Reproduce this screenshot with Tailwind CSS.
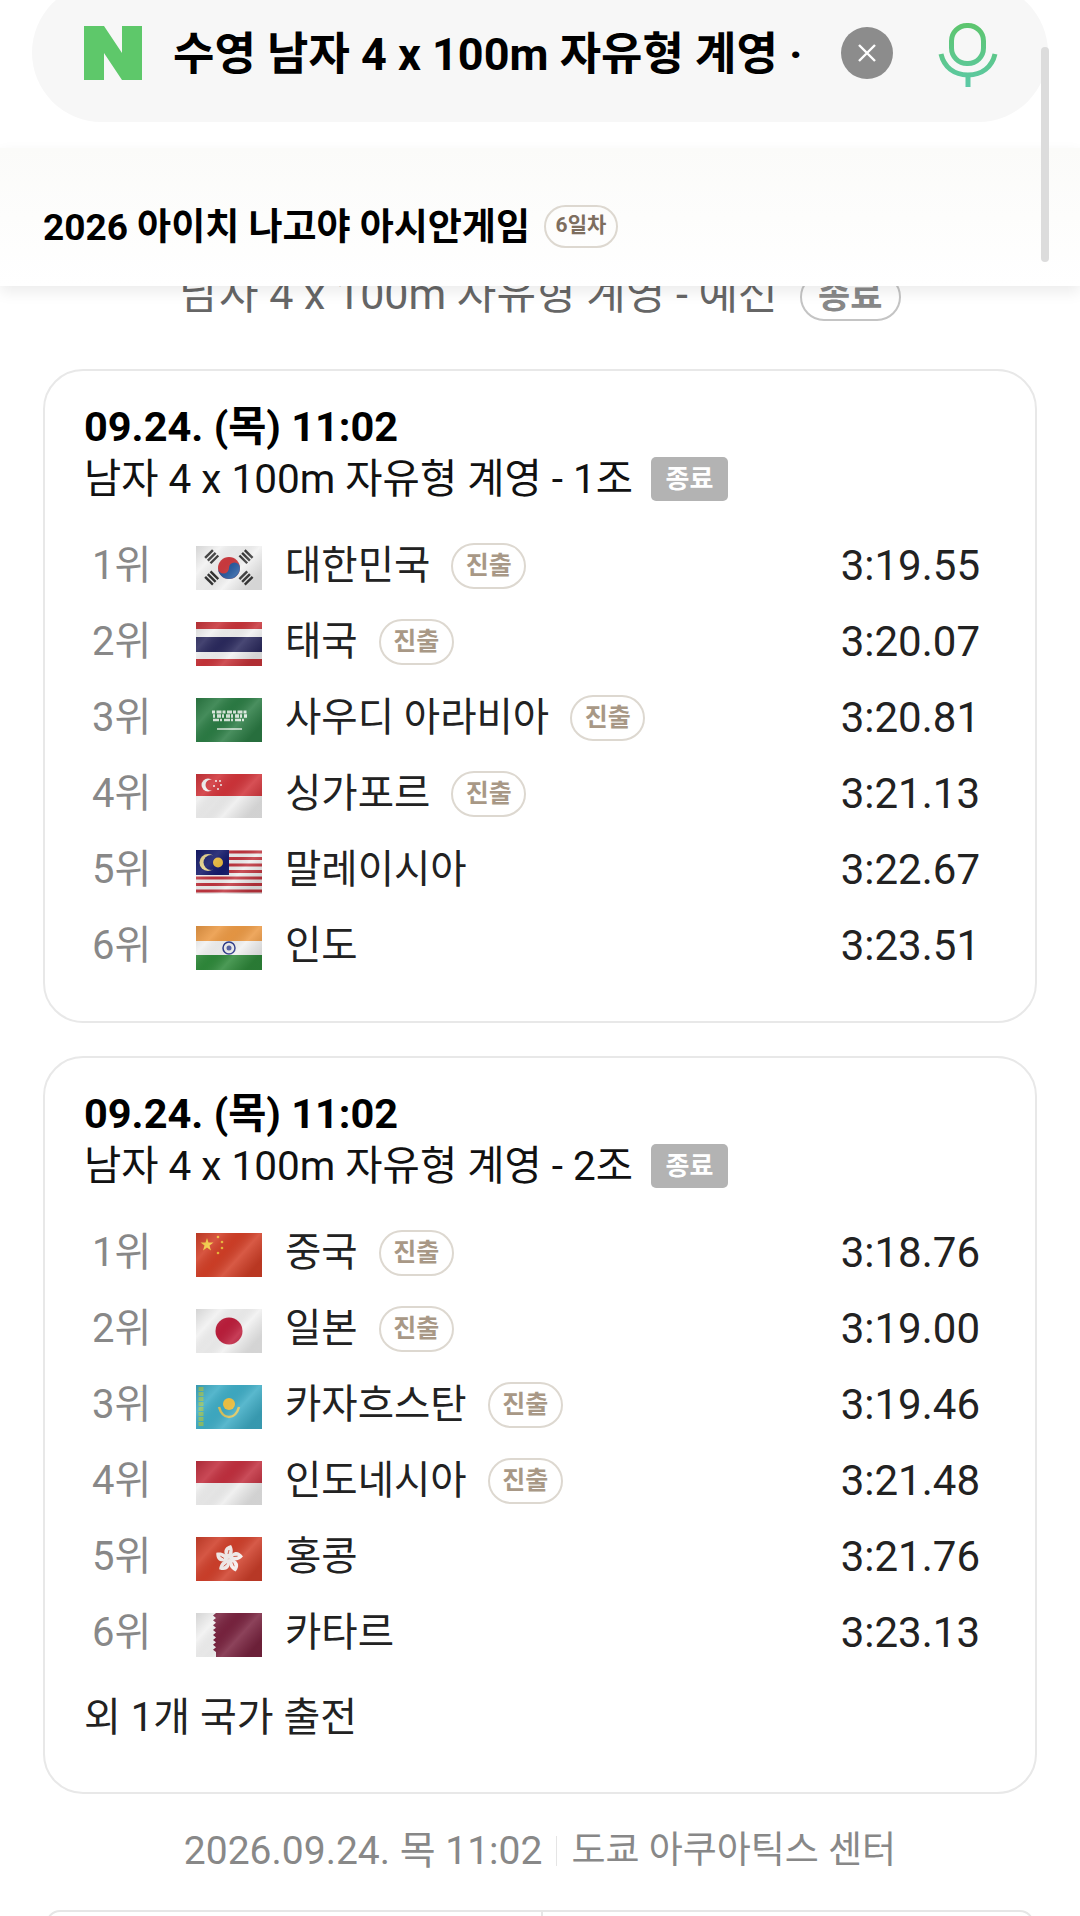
<!DOCTYPE html>
<html lang="ko">
<head>
    <meta charset="UTF-8">
    <meta name="viewport" content="width=device-width, initial-scale=1.0">
    <title>수영 남자 4 x 100m 자유형 계영</title>
    <script src="https://cdn.jsdelivr.net/npm/@tailwindcss/browser@4"></script>
</head>
<body class="bg-white">

<svg class="absolute w-0 h-0">
    <defs>
        <linearGradient id="sheen" x1="0" y1="0" x2="1" y2="0.6">
            <stop offset="0" stop-color="#000" stop-opacity="0.12"/>
            <stop offset="0.28" stop-color="#fff" stop-opacity="0.12"/>
            <stop offset="0.5" stop-color="#000" stop-opacity="0.04"/>
            <stop offset="0.72" stop-color="#fff" stop-opacity="0.14"/>
            <stop offset="1" stop-color="#000" stop-opacity="0.12"/>
        </linearGradient>
        <linearGradient id="mic" gradientUnits="userSpaceOnUse" x1="0" y1="0" x2="0" y2="65">
            <stop offset="0" stop-color="#5dc56c"/>
            <stop offset="1" stop-color="#5cc9a7"/>
        </linearGradient>
    </defs>
</svg>

<div class="relative h-[1916px] overflow-hidden font-[Roboto,'Noto_Sans_CJK_KR',sans-serif] text-[#111]">

    <!-- search bar -->
    <div class="h-[148px] px-8 flex flex-col">
        <div class="-mt-[17px] h-[139px] shrink-0 rounded-full bg-[#f7f7f7] flex items-start pt-[39px] pl-[52px]">
            <svg class="w-[58px] h-[54px] mt-[4px] shrink-0" viewBox="0 0 58 54"><path fill="#5ec86a" d="M0 0h20l18 27V0h20v54H38L20 27v27H0z"/></svg>
            <div class="ml-[31px] w-[632px] h-[62px] mt-[2px] whitespace-nowrap text-[45px] leading-[62px] font-bold text-black">수영 남자 4 x 100m 자유형 계영 ·</div>
            <div class="ml-9 mt-[5px] w-[52px] h-[52px] rounded-full bg-[#8c8c8c] flex items-center justify-center shrink-0">
                <svg class="w-[20px] h-[20px]" viewBox="0 0 20 20"><path d="M2 2l16 16M18 2L2 18" stroke="#fff" stroke-width="2.4"/></svg>
            </div>
            <svg class="ml-[45px] w-[60px] h-[66px] shrink-0" viewBox="0 0 60 66" fill="none" stroke="url(#mic)" stroke-width="5">
                <rect x="13.500" y="3.500" width="32" height="38" rx="15.500"/>
                <path d="M3 32c3 13 13 21 27 21s24-8 27-21"/>
                <path d="M30 53v12"/>
            </svg>
        </div>
    </div>

    <!-- sticky title -->
    <div class="relative z-10 h-[138px] bg-gradient-to-b from-[#fbfbf9] to-white shadow-[0_6px_14px_rgba(0,0,0,0.08)] px-[43px] pt-[18px] flex items-center gap-[14px]">
        <span class="mt-[4px] text-[37px] font-bold text-black whitespace-nowrap">2026 아이치 나고야 아시안게임</span>
        <span class="w-[74px] h-[43px] rounded-full border-2 border-[#ddd8d0] text-[#7d6e5f] text-[21px] font-bold flex items-center justify-center">6일차</span>
    </div>

    <!-- round title, half hidden under the sticky bar -->
    <div class="-mt-[14px] h-[97px] flex items-start justify-center gap-[22px]">
        <span class="text-[#666] text-[43px] leading-[44px] whitespace-nowrap">남자 4 x 100m 자유형 계영 - 예선</span>
        <span class="mt-[1px] w-[101px] h-[48px] rounded-full border-2 border-[#c4c4c4] text-[#888] font-bold text-[35px] flex items-center justify-center">종료</span>
    </div>

    <div id="heats" class="px-[43px] flex flex-col gap-[33px]"></div>

    <!-- venue line -->
    <div class="mt-[34px] flex items-center justify-center text-[#888] leading-[46px]">
        <span class="text-[39px]">2026.09.24. 목 11:02</span>
        <span class="w-[1px] h-[30px] bg-[#e5e5e5] mx-[14px]"></span>
        <span class="text-[37px]">도쿄 아쿠아틱스 센터</span>
    </div>

    <!-- next card top edge -->
    <div class="mx-[46px] mt-[36px] h-[40px] rounded-t-[14px] border-2 border-[#e6e6e6] flex">
        <div class="w-[495px] border-r-2 border-[#e6e6e6]"></div>
    </div>

    <!-- scrollbar -->
    <div class="absolute left-[1041px] top-[47px] w-[8px] h-[215px] rounded-full bg-[#dcdcdc] z-20"></div>
</div>

<script>
    const sheen = '<rect width="66" height="44" fill="url(#sheen)"/>';
    const flag = inner => `<svg class="mt-[3px] w-[66px] h-[44px] blur-[0.4px] shrink-0" viewBox="0 0 66 44">${inner}${sheen}</svg>`;

    const trigram = (x, y, angle) => `<g transform="translate(${x} ${y}) rotate(${angle})" fill="#333"><rect x="-5.500" y="-5" width="11" height="2.400"/><rect x="-5.500" y="-1.200" width="11" height="2.400"/><rect x="-5.500" y="2.600" width="11" height="2.400"/></g>`;
    const petal = angle => `<g transform="rotate(${angle} 33 22)"><path d="M33 22C26 17 27 10 35 8c3 5 2 10-2 14z" fill="#f8f1ef"/><path d="M32 17l1-4" stroke="#d0402b" stroke-width="0.800"/></g>`;

    const flags = {
        kr: `<rect width="66" height="44" fill="#f2f2f2"/>
             ${trigram(15.7, 10.7, -45)}${trigram(50, 10.7, 45)}${trigram(15.7, 32, 45)}${trigram(50, 32, -45)}
             <circle cx="33" cy="22" r="11" fill="#cf3a3f"/>
             <path d="M22 22a11 11 0 0 0 22 0 5.500 5.500 0 0 0-11 0 5.500 5.500 0 0 1-11 0z" fill="#24589f"/>`,
        th: `<rect width="66" height="44" fill="#f1f1f1"/><rect width="66" height="7" fill="#c8343a"/><rect y="37" width="66" height="7" fill="#c8343a"/><rect y="15" width="66" height="15" fill="#2b2a5e"/>`,
        sa: `<rect width="66" height="44" fill="#2c7d45"/><g stroke="#dcebdf" fill="none"><path d="M16 14h35" stroke-width="3" stroke-dasharray="3 1.500 5 1"/><path d="M17 18h34" stroke-width="3.500" stroke-dasharray="2 2 4 1"/><path d="M17 22h33" stroke-width="2.500" stroke-dasharray="6 1 2 2"/><path d="M21 31h25" stroke-width="1.500"/></g>`,
        sg: `<rect width="66" height="44" fill="#eeeeee"/><rect width="66" height="22" fill="#d1343a"/><circle cx="12" cy="11" r="6.500" fill="#f2f2f2"/><circle cx="15" cy="11" r="5.500" fill="#d1343a"/><g fill="#f2f2f2"><circle cx="20" cy="7" r="1"/><circle cx="24" cy="7" r="1"/><circle cx="18" cy="12" r="1"/><circle cx="25" cy="11" r="1"/><circle cx="22" cy="15" r="1"/></g>`,
        my: `<rect width="66" height="44" fill="#eee"/><path d="M0 2h66M0 8.500h66M0 15h66M0 21.500h66M0 28h66M0 34.500h66M0 41h66" stroke="#c0343e" stroke-width="3"/><rect width="33" height="25" fill="#141a6b"/><circle cx="12" cy="12.500" r="8.500" fill="#e8d48a"/><circle cx="15" cy="12.500" r="7.500" fill="#141a6b"/><circle cx="22" cy="12.500" r="5" fill="#e8b93c"/>`,
        in: `<rect width="66" height="44" fill="#f1f1f1"/><rect width="66" height="15" fill="#ec9a45"/><rect y="29" width="66" height="15" fill="#2f8a3b"/><circle cx="33" cy="22" r="6" fill="none" stroke="#2d3a8c" stroke-width="1.500"/><circle cx="33" cy="22" r="2.500" fill="#5560a8"/>`,
        cn: `<rect width="66" height="44" fill="#d23f27"/><path d="M11 5l1.500 4.500h5l-4 3 1.500 5-4-3-4 3 1.500-5-4-3h5z" fill="#f4c93f"/><g fill="#f0b838"><circle cx="22" cy="4" r="1.300"/><circle cx="26" cy="9" r="1.300"/><circle cx="26" cy="15" r="1.300"/><circle cx="22" cy="20" r="1.300"/></g>`,
        jp: `<rect width="66" height="44" fill="#f1f1f1"/><circle cx="33" cy="22" r="13.500" fill="#be1e3c"/>`,
        kz: `<rect width="66" height="44" fill="#3fadc6"/><path d="M5 2v40" stroke="#8cc06d" stroke-width="5" stroke-dasharray="4 1"/><circle cx="33" cy="19" r="6" fill="#f4c544"/><path d="M23 22c2 7 6 10 10 10s8-3 10-10" fill="none" stroke="#dcc45a" stroke-width="2.500"/>`,
        id: `<rect width="66" height="44" fill="#eeeeee"/><rect width="66" height="22" fill="#c2303f"/>`,
        hk: `<rect width="66" height="44" fill="#d0402b"/>${petal(0)}${petal(72)}${petal(144)}${petal(216)}${petal(288)}`,
        qa: `<rect width="66" height="44" fill="#f1f1f1"/><path d="M66 0H20l-3 2.400 3 2.500-3 2.400 3 2.500-3 2.400 3 2.500-3 2.400 3 2.400-3 2.500 3 2.400-3 2.500 3 2.400-3 2.500 3 2.400-3 2.500 3 2.400V44h46z" fill="#7a2440"/>`
    };

    const heats = [
        { title: "남자 4 x 100m 자유형 계영 - 1조", rows: [
            { rank: "1위", flag: "kr", name: "대한민국", pass: true, time: "3:19.55" },
            { rank: "2위", flag: "th", name: "태국", pass: true, time: "3:20.07" },
            { rank: "3위", flag: "sa", name: "사우디 아라비아", pass: true, time: "3:20.81" },
            { rank: "4위", flag: "sg", name: "싱가포르", pass: true, time: "3:21.13" },
            { rank: "5위", flag: "my", name: "말레이시아", pass: false, time: "3:22.67" },
            { rank: "6위", flag: "in", name: "인도", pass: false, time: "3:23.51" }
        ] },
        { title: "남자 4 x 100m 자유형 계영 - 2조", more: "외 1개 국가 출전", rows: [
            { rank: "1위", flag: "cn", name: "중국", pass: true, time: "3:18.76" },
            { rank: "2위", flag: "jp", name: "일본", pass: true, time: "3:19.00" },
            { rank: "3위", flag: "kz", name: "카자흐스탄", pass: true, time: "3:19.46" },
            { rank: "4위", flag: "id", name: "인도네시아", pass: true, time: "3:21.48" },
            { rank: "5위", flag: "hk", name: "홍콩", pass: false, time: "3:21.76" },
            { rank: "6위", flag: "qa", name: "카타르", pass: false, time: "3:23.13" }
        ] }
    ];

    document.getElementById("heats").innerHTML = heats.map(heat => `
        <div class="rounded-[40px] border-2 border-[#e8e8e8] bg-white pl-[39px] pr-[55px] pt-[31px] ${heat.more ? "pb-[49px]" : "pb-[37px]"}">
            <div class="text-[41.5px] leading-[50px] font-bold text-black">09.24. (목) 11:02</div>
            <div class="mt-[2px] flex items-center gap-[18px] h-[50px]">
                <span class="text-[40.5px] whitespace-nowrap">${heat.title}</span>
                <span class="w-[77px] h-[44px] rounded-[5px] bg-[#b3b3b3] text-white text-[26px] font-bold flex items-center justify-center">종료</span>
            </div>
            <div class="mt-[24px]">
                ${heat.rows.map(r => `
                <div class="h-[76px] flex items-center">
                    <span class="w-[112px] pl-2 text-[40px] text-[#888]">${r.rank}</span>
                    ${flag(flags[r.flag])}
                    <span class="ml-[23px] text-[39.5px] text-[#222] whitespace-nowrap">${r.name}</span>
                    ${r.pass ? '<span class="ml-[21px] w-[75px] h-[46px] rounded-full border-2 border-[#ddd8d0] text-[#a89886] text-[25px] font-bold flex items-center justify-center">진출</span>' : ""}
                    <span class="ml-auto -mt-[2px] text-[42px] text-[#222]">${r.time}</span>
                </div>`).join("")}
            </div>
            ${heat.more ? `<div class="mt-[22px] text-[40px] leading-[50px] text-[#222]">${heat.more}</div>` : ""}
        </div>
    `).join("");
</script>
</body>
</html>
